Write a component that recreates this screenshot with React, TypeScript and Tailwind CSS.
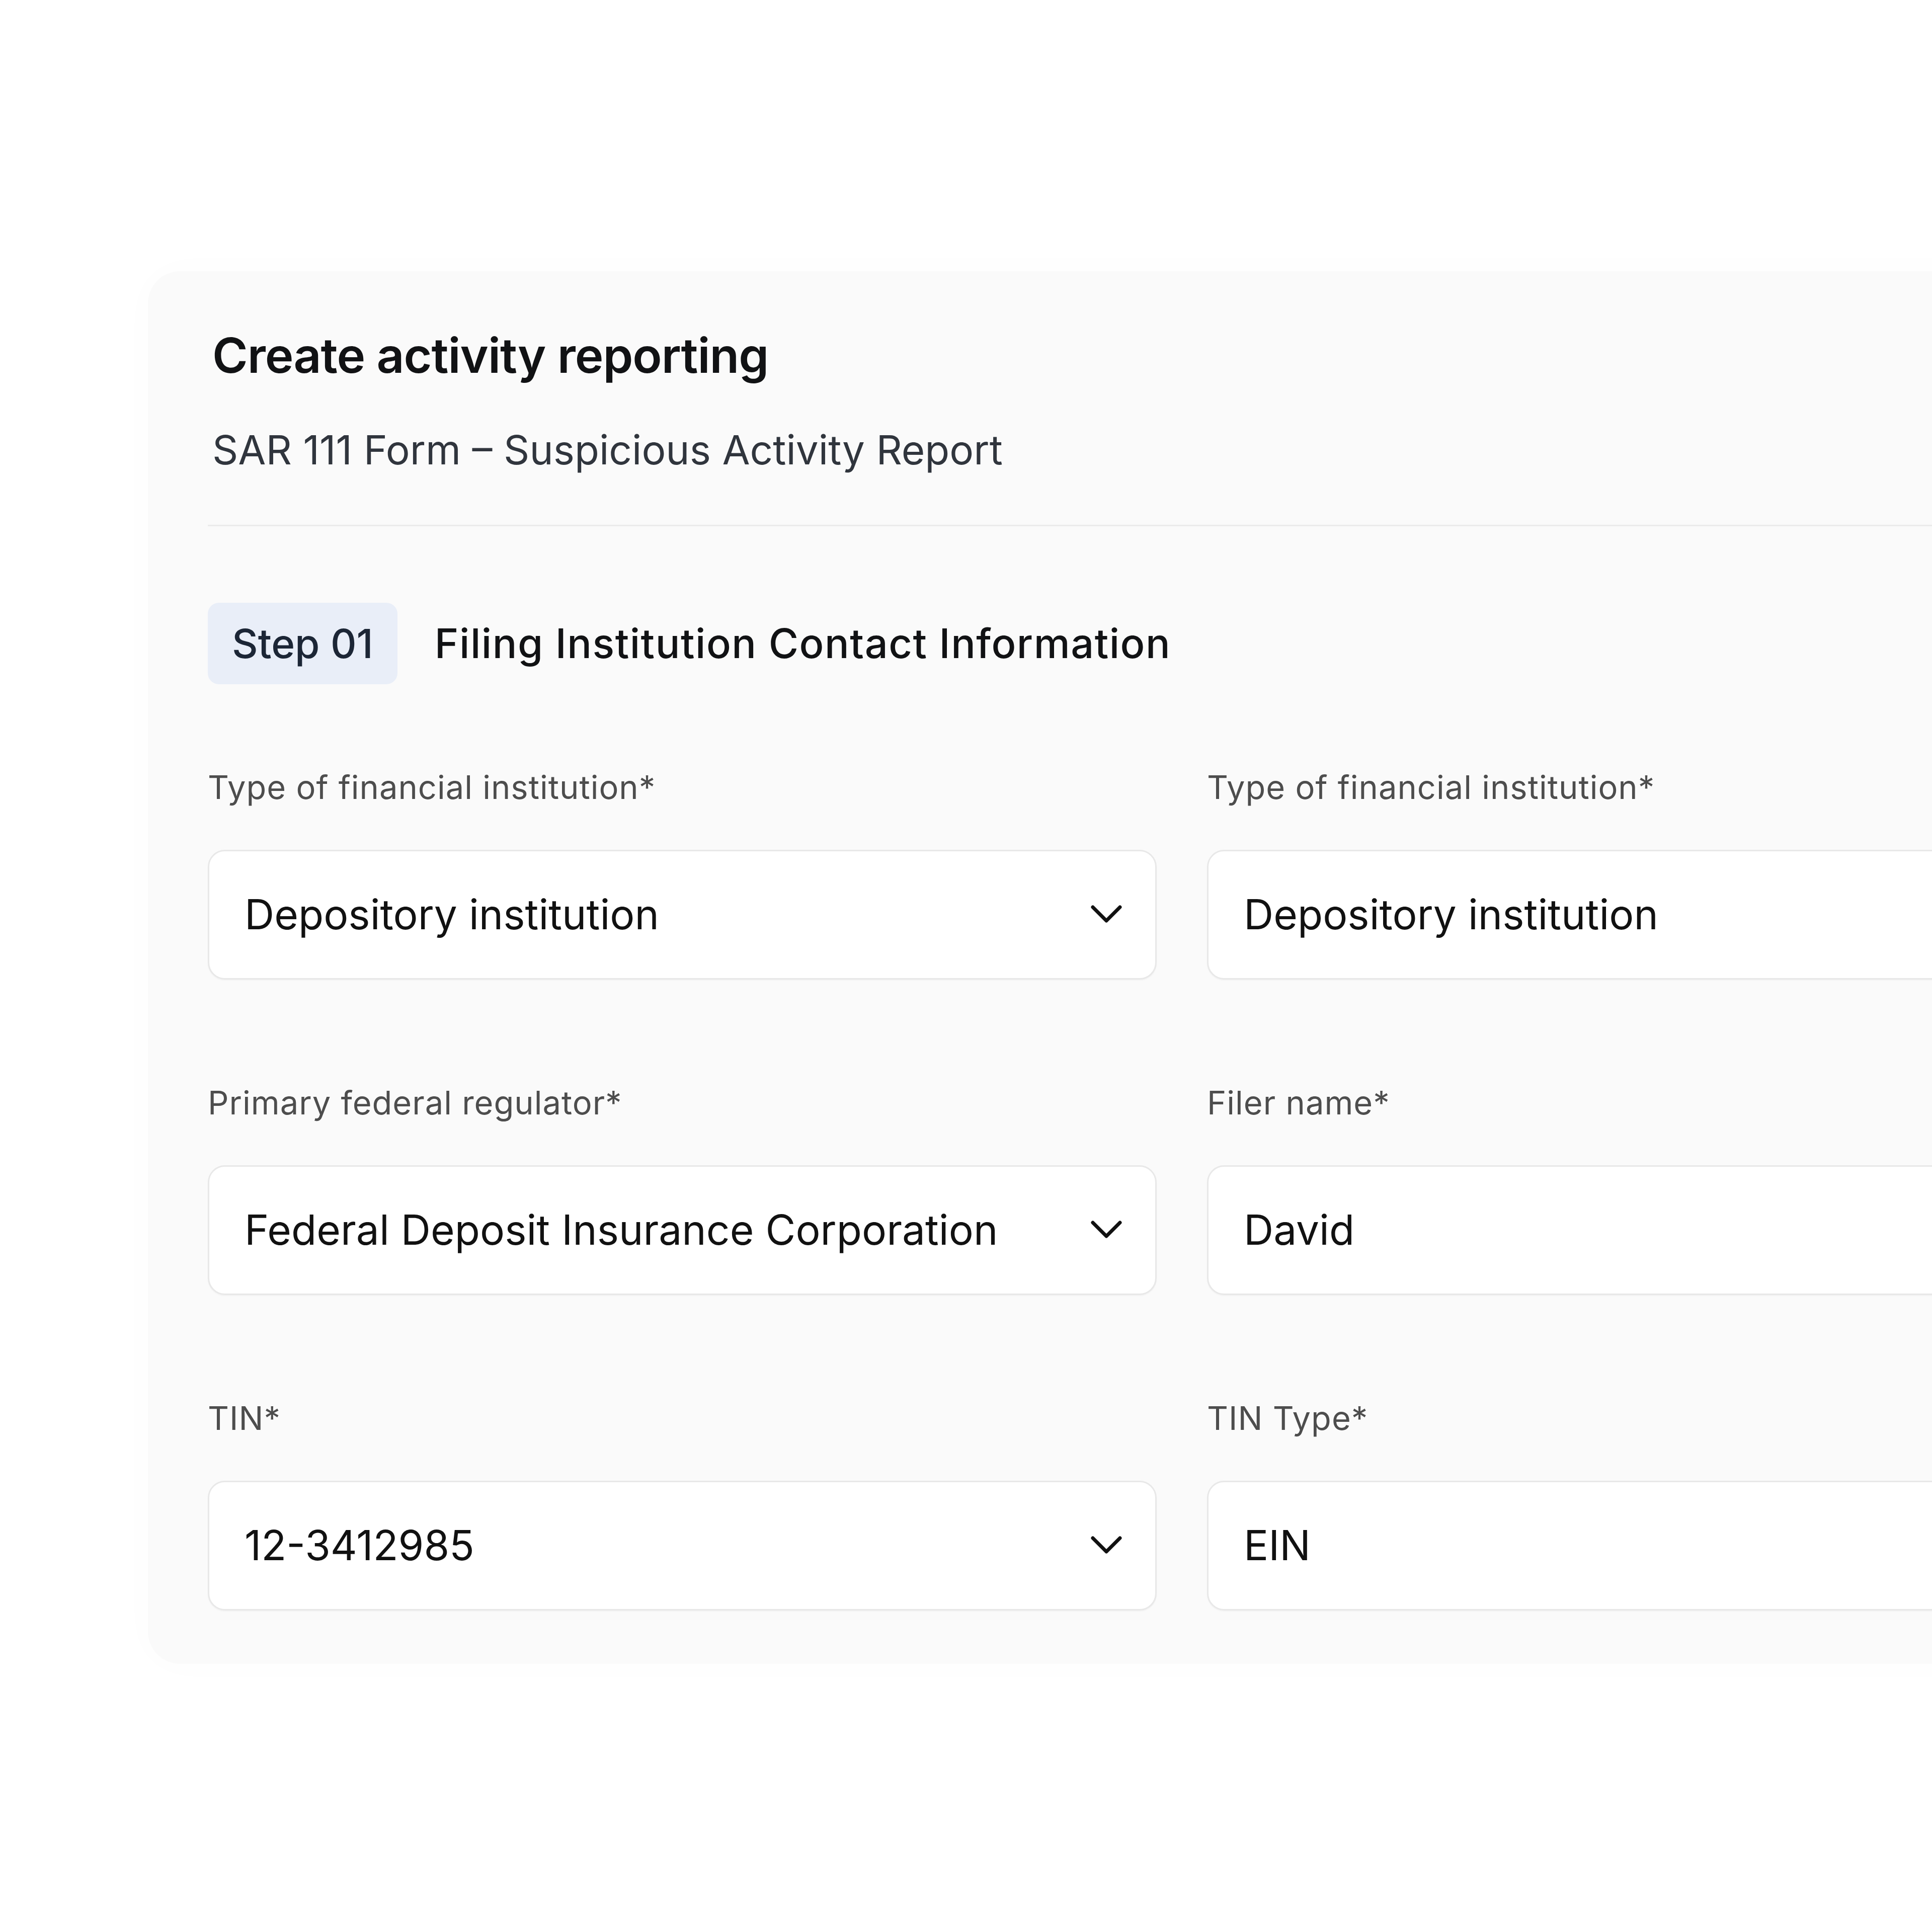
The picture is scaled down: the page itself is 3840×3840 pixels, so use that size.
import { ReactNode } from 'react';

const fields = [
  { label: 'Type of financial institution*', value: 'Depository institution', select: true },
  { label: 'Type of financial institution*', value: 'Depository institution', select: true },
  { label: 'Primary federal regulator*', value: 'Federal Deposit Insurance Corporation', select: true },
  { label: 'Filer name*', value: 'David', select: false },
  { label: 'TIN*', value: '12-3412985', select: true },
  { label: 'TIN Type*', value: 'EIN', select: true },
];

function Chevron() {
  return (
    <svg width="62" height="38" viewBox="0 0 62 38" fill="none" className="shrink-0">
      <path d="M4 4 L31 31 L58 4" stroke="#111111" strokeWidth="7" strokeLinecap="round" strokeLinejoin="round" />
    </svg>
  );
}

function Field({ label, children }: { label: string; children: ReactNode }) {
  return (
    <div className="flex flex-col">
      <label className="text-[65px] leading-none tracking-[1px] text-[#4d4d4d]">{label}</label>
      <div className="mt-[92px] h-[258px] rounded-[34px] border-[3px] border-[#e8e8e8] bg-white shadow-[0_2px_2px_rgba(0,0,0,0.03)] flex items-center justify-between pl-[70px] pr-[66px]">
        {children}
      </div>
    </div>
  );
}

export default function App() {
  return (
    <div className="w-[3840px] h-[3840px] overflow-hidden bg-white pt-[539px] pl-[294px] font-['Inter','Liberation_Sans',sans-serif]">
      <div className="w-[4300px] h-[2768px] rounded-[64px] bg-[#fafafa] shadow-[0_0_80px_rgba(0,0,0,0.015)] pt-[119px] pl-[119px]">
        <div className="pl-[9px]">
          <h1 className="text-[96px] leading-none font-semibold text-[#111214] tracking-[-1px]">Create activity reporting</h1>
          <p className="mt-[100px] text-[80px] leading-none text-[#30353d]">SAR 111 Form – Suspicious Activity Report</p>
        </div>

        <div className="mt-[109px] h-[3px] bg-[#ebebeb]" />

        <div className="mt-[152px] flex items-center gap-[74px]">
          <div className="h-[162px] rounded-[22px] bg-[#e9eef8] px-[48px] flex items-center">
            <span className="text-[80px] leading-none font-medium text-[#1c2636]">Step 01</span>
          </div>
          <span className="text-[81px] leading-none font-medium tracking-[1.5px] text-[#111214]">Filing Institution Contact Information</span>
        </div>

        <div className="mt-[172px] grid grid-cols-[1886px_1886px] gap-x-[100px] gap-y-[212px]">
          {fields.map((f, i) => (
            <Field key={i} label={f.label}>
              <span className="text-[82px] leading-none text-[#111111]">{f.value}</span>
              {f.select && <Chevron />}
            </Field>
          ))}
        </div>
      </div>
    </div>
  );
}
